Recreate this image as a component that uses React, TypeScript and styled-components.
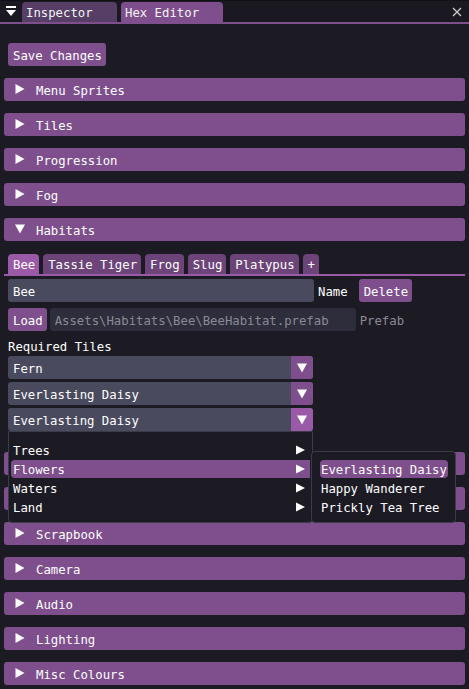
import React from 'react';
import styled, { createGlobalStyle } from 'styled-components';

const purple = '#7e4f8c';
const purpleHot = '#9a5aa8';
const bg = '#1c1b24';

const GlobalStyle = createGlobalStyle`
  html, body {
    margin: 0;
    padding: 0;
    background: ${bg};
  }
  body {
    font-family: 'DejaVu Sans Mono', 'Liberation Mono', monospace;
    font-size: 12.3px;
    color: #ffffff;
  }
`;

const Window = styled.div`
  position: relative;
  width: 469px;
  height: 689px;
  overflow: hidden;
  background: ${bg};
`;

const TitleBar = styled.div`
  display: flex;
  align-items: flex-end;
  box-sizing: border-box;
  height: 24px;
  padding-left: 5px;
  border-top: 1px solid #121118;
  border-bottom: 2px solid ${purple};
  background: #1a1921;
`;

const MenuGlyph = styled.svg`
  width: 12px;
  height: 12px;
  margin-right: 5px;
  align-self: center;
  margin-top: 1px;
`;

const DockTab = styled.div<{ $active?: boolean; $width: number }>`
  width: ${(p) => p.$width}px;
  height: 20px;
  box-sizing: border-box;
  padding: 2px 0 0 4px;
  margin-right: 4px;
  display: flex;
  align-items: center;
  border-radius: 4px 4px 0 0;
  background: ${(p) => (p.$active ? purple : '#563e66')};
  color: #f4f4f4;
`;

const CloseButton = styled.svg`
  margin-left: auto;
  margin-right: 7px;
  align-self: center;
  width: 10px;
  height: 10px;
`;

const Body = styled.div`
  padding: 0 4px;
`;

const Button = styled.div`
  display: inline-flex;
  align-items: center;
  height: 23px;
  padding: 2px 4px 0 5px;
  box-sizing: border-box;
  border-radius: 3px;
  background: ${purple};
  white-space: nowrap;
  flex-shrink: 0;
`;

const SaveRow = styled.div`
  margin: 19px 0 0 4px;
`;

const HeaderBox = styled.div<{ $gap?: number }>`
  display: flex;
  align-items: center;
  box-sizing: border-box;
  height: 23px;
  margin-top: ${(p) => p.$gap ?? 12}px;
  padding: 2px 0 0 11px;
  border-radius: 3px;
  background: ${purple};
`;

const HeaderArrow = styled.svg`
  width: 10px;
  height: 10px;
  margin-right: 11px;
  margin-bottom: 4px;
`;

const Header: React.FC<{ title?: string; open?: boolean; gap?: number }> = ({ title, open, gap }) => (
  <HeaderBox $gap={gap}>
    <HeaderArrow viewBox="0 0 10 10">
      {open ? <polygon points="0,0.5 10,0.5 5,9.5" fill="#fff" /> : <polygon points="0.5,0 9.5,5 0.5,10" fill="#fff" />}
    </HeaderArrow>
    {title}
  </HeaderBox>
);

const Section = styled.div`
  margin-top: 13px;
`;

const TabBar = styled.div`
  display: flex;
  gap: 4px;
  padding-left: 4px;
  border-bottom: 2px solid ${purpleHot};
`;

const HabitatTab = styled.div<{ $active?: boolean }>`
  height: 20px;
  box-sizing: border-box;
  display: flex;
  align-items: center;
  padding: 2px 4px 0 5px;
  border-radius: 4px 4px 0 0;
  background: ${(p) => (p.$active ? purpleHot : '#6c4479')};
`;

const Row = styled.div<{ $top: number }>`
  display: flex;
  align-items: center;
  margin: ${(p) => p.$top}px 0 0 4px;
`;

const Field = styled.input<{ $dim?: boolean; $width: number }>`
  width: ${(p) => p.$width}px;
  height: 23px;
  box-sizing: border-box;
  border: none;
  outline: none;
  border-radius: 3px;
  padding: 2px 5px 0;
  margin: 0 0 0 ${(p) => (p.$dim ? 3 : 0)}px;
  font: inherit;
  background: ${(p) => (p.$dim ? '#2e2d3b' : '#4a4a5e')};
  color: ${(p) => (p.$dim ? '#8b8a97' : '#ffffff')};
  flex-shrink: 0;
`;

const Label = styled.span<{ $muted?: boolean; $after?: number }>`
  margin-left: 4px;
  margin-right: ${(p) => p.$after ?? 0}px;
  padding-top: 2px;
  color: ${(p) => (p.$muted ? '#8b8a97' : '#ffffff')};
  white-space: nowrap;
`;

const Caption = styled.div`
  margin: 6px 0 0 4px;
  box-sizing: border-box;
  height: 17px;
  padding-top: 3px;
  line-height: 14px;
`;

const ComboList = styled.div`
  display: flex;
  flex-direction: column;
  gap: 3px;
  margin: 2px 0 0 4px;
  width: 305px;
`;

const ComboWrap = styled.div`
  position: relative;
`;

const ComboBox = styled.div`
  display: flex;
  height: 23px;
  border-radius: 3px;
  overflow: hidden;
  background: #4a4a5e;
`;

const ComboValue = styled.div`
  flex: 1;
  display: flex;
  align-items: center;
  padding: 2px 0 0 5px;
`;

const ComboArrow = styled.div<{ $hot?: boolean }>`
  width: 22px;
  display: flex;
  align-items: center;
  justify-content: center;
  background: ${(p) => (p.$hot ? purpleHot : purple)};
`;

const DownGlyph = () => (
  <svg width="10" height="10" viewBox="0 0 10 10">
    <polygon points="0,0.5 10,0.5 5,9.5" fill="#fff" />
  </svg>
);

const RightGlyph = () => (
  <svg width="9" height="10" viewBox="0 0 9 10">
    <polygon points="0,0.5 9,5 0,9.5" fill="#fff" />
  </svg>
);

const Combo: React.FC<{ value: string; hot?: boolean; children?: React.ReactNode }> = ({ value, hot, children }) => (
  <ComboWrap>
    <ComboBox>
      <ComboValue>{value}</ComboValue>
      <ComboArrow $hot={hot}>
        <DownGlyph />
      </ComboArrow>
    </ComboBox>
    {children}
  </ComboWrap>
);

const Popup = styled.div`
  position: absolute;
  top: 100%;
  left: 0;
  width: 305px;
  box-sizing: border-box;
  padding: 9px 2px 6px 2px;
  display: flex;
  flex-direction: column;
  gap: 1px;
  background: ${bg};
  border: 1px solid #3c3b4a;
  border-radius: 0 0 4px 4px;
  z-index: 5;
`;

const MenuItem = styled.div<{ $selected?: boolean }>`
  position: relative;
  display: flex;
  align-items: center;
  box-sizing: border-box;
  height: 18px;
  padding: 1px 5px 0 2px;
  border-radius: 4px 0 0 4px;
  background: ${(p) => (p.$selected ? purple : 'transparent')};
  white-space: nowrap;
  & > svg {
    margin-left: auto;
    margin-top: -1px;
  }
`;

const SubMenu = styled.div`
  position: absolute;
  top: -9px;
  left: calc(100% + 1px);
  width: 145px;
  box-sizing: border-box;
  padding: 8px 7px 6px 8px;
  display: flex;
  flex-direction: column;
  gap: 1px;
  background: ${bg};
  border: 1px solid #3c3b4a;
  border-radius: 4px;
`;

const SubItem = styled.div<{ $selected?: boolean }>`
  height: 18px;
  box-sizing: border-box;
  display: flex;
  align-items: center;
  padding: 1px 0 0 1px;
  border-radius: 4px;
  background: ${(p) => (p.$selected ? purple : 'transparent')};
  white-space: nowrap;
`;

const tileGroups = ['Trees', 'Flowers', 'Waters', 'Land'];
const flowers = ['Everlasting Daisy', 'Happy Wanderer', 'Prickly Tea Tree'];
const habitats = ['Bee', 'Tassie Tiger', 'Frog', 'Slug', 'Platypus', '+'];

const App: React.FC = () => (
  <Window>
    <GlobalStyle />
    <TitleBar>
      <MenuGlyph viewBox="0 0 12 12">
        <rect x="1" y="0" width="10" height="2" fill="#fff" />
        <polygon points="1,4 11,4 6,10" fill="#fff" />
      </MenuGlyph>
      <DockTab $width={95}>Inspector</DockTab>
      <DockTab $width={102} $active>
        Hex Editor
      </DockTab>
      <CloseButton viewBox="0 0 10 10">
        <path d="M1 1 L9 9 M9 1 L1 9" stroke="#c9c9cf" strokeWidth="1.3" />
      </CloseButton>
    </TitleBar>

    <Body>
      <SaveRow>
        <Button>Save Changes</Button>
      </SaveRow>

      <Header title="Menu Sprites" />
      <Header title="Tiles" />
      <Header title="Progression" />
      <Header title="Fog" />
      <Header title="Habitats" open />

      <Section>
        <TabBar>
          {habitats.map((h, i) => (
            <HabitatTab key={h} $active={i === 0}>
              {h}
            </HabitatTab>
          ))}
        </TabBar>

        <Row $top={3}>
          <Field $width={306} defaultValue="Bee" readOnly />
          <Label $after={11}>Name</Label>
          <Button>Delete</Button>
        </Row>

        <Row $top={6}>
          <Button>Load</Button>
          <Field $dim $width={306} defaultValue="Assets\Habitats\Bee\BeeHabitat.prefab" readOnly />
          <Label $muted>Prefab</Label>
        </Row>

        <Caption>Required Tiles</Caption>

        <ComboList>
          <Combo value="Fern" />
          <Combo value="Everlasting Daisy" />
          <Combo value="Everlasting Daisy" hot>
            <Popup>
              {tileGroups.map((g) => (
                <MenuItem key={g} $selected={g === 'Flowers'}>
                  {g}
                  <RightGlyph />
                  {g === 'Flowers' && (
                    <SubMenu>
                      {flowers.map((f, i) => (
                        <SubItem key={f} $selected={i === 0}>
                          {f}
                        </SubItem>
                      ))}
                    </SubMenu>
                  )}
                </MenuItem>
              ))}
            </Popup>
          </Combo>
        </ComboList>
      </Section>

      {/* two headers sit under the open popup; their labels are hidden by it */}
      <Header gap={21} />
      <Header />
      <Header title="Scrapbook" />
      <Header title="Camera" />
      <Header title="Audio" />
      <Header title="Lighting" />
      <Header title="Misc Colours" />
    </Body>
  </Window>
);

export default App;
